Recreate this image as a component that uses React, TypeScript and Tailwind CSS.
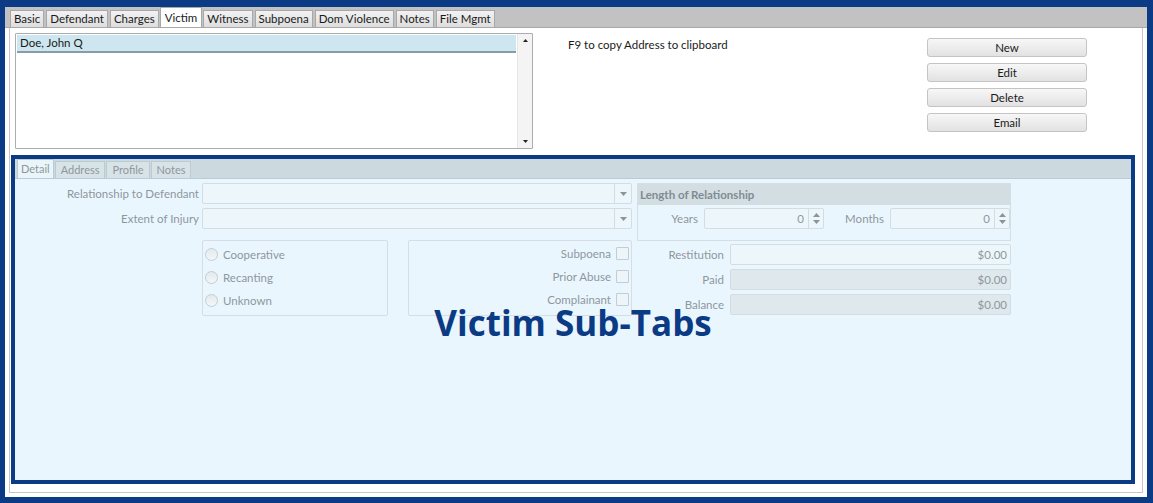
import React from "react";

const NAVY = "bg-[#0c3b85]";

function Tab({ label, selected }: { label: string; selected?: boolean }) {
  return (
    <div
      className={
        selected
          ? "h-[20px] px-[4px] -mx-[1px] z-10 bg-white border border-b-0 border-[#a8a8a8] flex items-center text-[#1a1a1a]"
          : "h-[17px] px-[3px] bg-[#e6e6e6] border border-b-0 border-[#a8a8a8] flex items-center text-[#1a1a1a] bg-gradient-to-b from-[#f2f2f2] to-[#dedede]"
      }
    >
      {label}
    </div>
  );
}

function SubTab({ label, selected }: { label: string; selected?: boolean }) {
  return (
    <div
      className={
        selected
          ? "h-[19px] px-[3px] bg-[#eaf5fa] border border-b-0 border-[#bccad1] flex items-center text-[#8e979e] z-10"
          : "h-[17px] px-[5px] bg-[#d8e3e8] border border-b-0 border-[#bccad1] flex items-center text-[#8e979e]"
      }
    >
      {label}
    </div>
  );
}

function Btn({ label }: { label: string }) {
  return (
    <div className="w-[160px] h-[19px] rounded-[3px] border border-[#c4c4c4] bg-gradient-to-b from-[#f7f7f7] to-[#e2e2e2] flex items-center justify-center text-[#1a1a1a]">
      {label}
    </div>
  );
}

function Combo() {
  return (
    <div className="w-[430px] h-[21px] border border-[#d2dde2] bg-[#edf7fb] flex justify-end rounded-[2px]">
      <div className="w-[17px] h-full border-l border-[#d2dde2] flex items-center justify-center">
        <svg width="7" height="4" viewBox="0 0 7 4">
          <path d="M0 0 L7 0 L3.5 4 Z" fill="#8a949b" />
        </svg>
      </div>
    </div>
  );
}

function Spin({ w }: { w: string }) {
  return (
    <div className={`${w} h-[21px] border border-[#d2dde2] bg-[#edf7fb] flex items-center rounded-[2px]`}>
      <div className="flex-1 text-right pr-[4px] text-[#8e979e]">0</div>
      <div className="w-[15px] h-full border-l border-[#d2dde2] flex flex-col items-center justify-center gap-[3px]">
        <svg width="7" height="4" viewBox="0 0 7 4">
          <path d="M0 4 L7 4 L3.5 0 Z" fill="#8a949b" />
        </svg>
        <svg width="7" height="4" viewBox="0 0 7 4">
          <path d="M0 0 L7 0 L3.5 4 Z" fill="#8a949b" />
        </svg>
      </div>
    </div>
  );
}

function Radio({ label }: { label: string }) {
  return (
    <div className="flex items-center h-[23px] pl-[1px]">
      <div className="w-[13px] h-[13px] rounded-full border border-[#c3ccd2] bg-gradient-to-b from-[#e3e9ec] to-[#f3f7f9]" />
      <span className="ml-[5px] text-[#8e979e]">{label}</span>
    </div>
  );
}

function Check({ label }: { label: string }) {
  return (
    <div className="flex items-center justify-end h-[23px]">
      <span className="mr-[5px] text-[#8e979e]">{label}</span>
      <div className="w-[13px] h-[13px] border border-[#c3ccd2] bg-[#edf5f8] rounded-[1px]" />
    </div>
  );
}

function Money({ label, gray }: { label: string; gray?: boolean }) {
  return (
    <div className="flex items-center h-[25px]">
      <div className="w-[87px] text-right text-[#8e979e]">{label}</div>
      <div
        className={`ml-[6px] w-[281px] h-[21px] border border-[#d2dde2] rounded-[2px] flex items-center justify-end pr-[3px] text-[#8e979e] ${
          gray ? "bg-[#dfe8ec]" : "bg-[#edf7fb]"
        }`}
      >
        $0.00
      </div>
    </div>
  );
}

export default function App() {
  const font = { fontFamily: "Lato, 'Noto Sans', sans-serif" };
  return (
    <div
      className={`w-[1153px] h-[503px] ${NAVY} pt-[7px] pl-[5px] pr-[6px] pb-[6px] flex flex-col text-[11.5px]`}
      style={font}
    >
      <div className="flex-1 flex flex-col bg-white">
        {/* top tab strip */}
        <div className="h-[21px] bg-[#c2c2c2] border-b border-[#a8a8a8] flex items-end pl-[5px] gap-[2px] shrink-0">
          <Tab label="Basic" />
          <Tab label="Defendant" />
          <Tab label="Charges" />
          <Tab label="Victim" selected />
          <Tab label="Witness" />
          <Tab label="Subpoena" />
          <Tab label="Dom Violence" />
          <Tab label="Notes" />
          <Tab label="File Mgmt" />
        </div>
        <div className="flex-1 flex flex-col px-[4px] pb-[4px]">
          <div className="flex-1 flex flex-col border-l border-r border-b border-[#c6c6c6]">
            {/* top row */}
            <div className="flex pt-[5px] pl-[5px]">
              <div className="w-[518px] h-[116px] border border-[#abadb3] flex bg-white rounded-[1px]">
                <div className="flex-1 p-[1px]">
                  <div className="h-[18px] bg-[#cde6ef] border-b-2 border-[#8a9ba3] flex items-center pl-[3px] text-[#1a1a1a]">
                    Doe, John Q
                  </div>
                </div>
                <div className="w-[15px] bg-[#f4f4f4] border-l border-[#e6e6e6] flex flex-col justify-between items-center py-[5px]">
                  <svg width="5" height="3" viewBox="0 0 5 3">
                    <path d="M0 3 L5 3 L2.5 0 Z" fill="#222" />
                  </svg>
                  <svg width="5" height="3" viewBox="0 0 5 3">
                    <path d="M0 0 L5 0 L2.5 3 Z" fill="#222" />
                  </svg>
                </div>
              </div>
              <div className="ml-[35px] w-[359px] pt-[3px] text-[#1a1a1a]">F9 to copy Address to clipboard</div>
              <div className="flex flex-col gap-[6px] pt-[5px]">
                <Btn label="New" />
                <Btn label="Edit" />
                <Btn label="Delete" />
                <Btn label="Email" />
              </div>
            </div>
            {/* annotated sub-tab panel */}
            <div className="ml-[1px] mr-[7px] mt-[6px] mb-[8px] flex-1 border-4 border-[#0c3b85] bg-[#eaf6fd] flex flex-col relative">
              <div className="h-[20px] bg-[#ccd9df] border-b border-[#bccad1] flex items-end pl-[2px] gap-[1px] shrink-0 text-[11px]">
                <SubTab label="Detail" selected />
                <SubTab label="Address" />
                <SubTab label="Profile" />
                <SubTab label="Notes" />
              </div>
              <div className="flex pt-[4px]">
                {/* left */}
                <div className="flex flex-col">
                  <div className="flex items-center">
                    <div className="w-[187px] text-right pr-[3px] text-[#8e979e]">Relationship to Defendant</div>
                    <Combo />
                  </div>
                  <div className="flex items-center mt-[4px]">
                    <div className="w-[187px] text-right pr-[3px] text-[#8e979e]">Extent of Injury</div>
                    <Combo />
                  </div>
                  <div className="flex mt-[11px] pl-[187px]">
                    <div className="w-[186px] h-[76px] border border-[#d4dee3] rounded-[2px] px-[1px] pt-[2px]">
                      <Radio label="Cooperative" />
                      <Radio label="Recanting" />
                      <Radio label="Unknown" />
                    </div>
                    <div className="ml-[20px] w-[224px] h-[76px] border border-[#d4dee3] rounded-[2px] pr-[2px] pt-[1px]">
                      <Check label="Subpoena" />
                      <Check label="Prior Abuse" />
                      <Check label="Complainant" />
                    </div>
                  </div>
                </div>
                {/* right */}
                <div className="ml-[5px] flex flex-col">
                  <div className="w-[374px] h-[58px] border border-[#d4dee3] flex flex-col">
                    <div className="h-[21px] bg-[#d3dee3] flex items-center pl-[2px] font-bold text-[#7f8b93]">
                      Length of Relationship
                    </div>
                    <div className="flex items-center mt-[3px]">
                      <div className="w-[66px] text-right pr-[6px] text-[#8e979e]">Years</div>
                      <Spin w="w-[120px]" />
                      <div className="w-[66px] text-right pr-[6px] text-[#8e979e]">Months</div>
                      <Spin w="w-[120px]" />
                    </div>
                  </div>
                  <div className="mt-[1px]">
                    <Money label="Restitution" />
                    <Money label="Paid" gray />
                    <Money label="Balance" gray />
                  </div>
                </div>
              </div>
              <div
                className="absolute left-0 right-0 top-[146px] text-center text-[#0c3b85] font-bold text-[35px] leading-none"
                style={{ fontFamily: "'Open Sans', 'Noto Sans', sans-serif" }}
              >
                Victim Sub-Tabs
              </div>
            </div>
          </div>
        </div>
      </div>
    </div>
  );
}
